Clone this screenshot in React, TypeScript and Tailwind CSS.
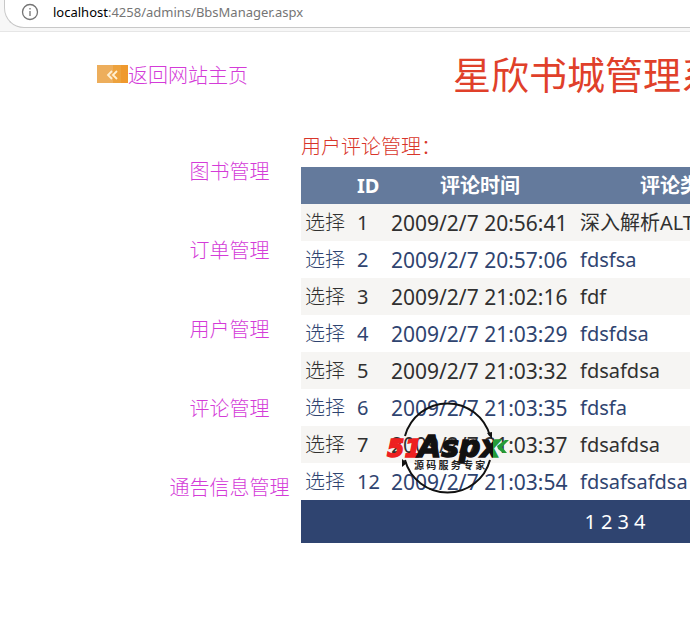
import React from 'react';

interface Comment {
  id: number;
  time: string;
  category: string;
}

const comments: Comment[] = [
  { id: 1, time: '2009/2/7 20:56:41', category: '深入解析ALTAS' },
  { id: 2, time: '2009/2/7 20:57:06', category: 'fdsfsa' },
  { id: 3, time: '2009/2/7 21:02:16', category: 'fdf' },
  { id: 4, time: '2009/2/7 21:03:29', category: 'fdsfdsa' },
  { id: 5, time: '2009/2/7 21:03:32', category: 'fdsafdsa' },
  { id: 6, time: '2009/2/7 21:03:35', category: 'fdsfa' },
  { id: 7, time: '2009/2/7 21:03:37', category: 'fdsafdsa' },
  { id: 12, time: '2009/2/7 21:03:54', category: 'fdsafsafdsa' },
];

const menu = ['图书管理', '订单管理', '用户管理', '评论管理', '通告信息管理'];

const AddressBar: React.FC = () => (
  <div className="h-8 border-b border-[#e6e6e6] bg-[#f7f7f7] pl-1">
    <div className="flex h-7 items-center gap-3 rounded-bl-[20px] border-b border-l border-[#c8c8c8] bg-white pb-1 pl-4">
      <svg className="h-5 w-5 shrink-0" viewBox="0 0 20 20" fill="none" stroke="#747474">
        <circle cx="9" cy="10" r="7.5" strokeWidth="1.3" />
        <path d="M9 9v5M9 6v1.5" strokeWidth="1.3" />
      </svg>
      <button type="button" aria-label="Address" className="text-left text-[13px] leading-5 whitespace-nowrap text-[#757575]">
        <span className="text-black">localhost</span>:4258/admins/BbsManager.aspx
      </button>
    </div>
  </div>
);

const BackIcon: React.FC = () => (
  <svg className="mb-1 h-[18px] w-[31px] shrink-0" viewBox="0 0 31 18">
    <rect width="31" height="18" fill="#eda23d" />
    <rect width="16" height="18" fill="#edae5c" />
    <rect x="24" width="7" height="18" fill="#ef992d" />
    <path d="M15 6l-4 4 4 4M20 6l-4 4 4 4" fill="none" stroke="#fff0d2" strokeWidth="1.8" />
  </svg>
);

const Watermark: React.FC = () => (
  <svg className="pointer-events-none absolute top-[267px] left-[83px] h-24 w-32" viewBox="0 0 128 96">
    <defs>
      <linearGradient id="brand">
        <stop offset="0.9" stopColor="#111" />
        <stop offset="0.9" stopColor="#249b38" />
      </linearGradient>
    </defs>
    <path d="M21 36A44 44 0 0 1 106 36" fill="none" stroke="#111" strokeWidth="2" />
    <path d="M21 60A44 44 0 0 0 106 60" fill="none" stroke="#111" strokeWidth="2" />
    <path d="M103 33l5-1 0 7zM18 67l0-8 5 4z" fill="#111" />
    <g fontFamily="'DejaVu Sans'" fontWeight="700" fontStyle="italic" strokeWidth="1.4">
      <text x="3" y="57" fontSize="25" fill="#ee2020" stroke="#ee2020">51</text>
      <text x="34" y="57" fontSize="30" fill="url(#brand)" stroke="url(#brand)">Aspx</text>
    </g>
    <path d="M113 46l8-6 4 0-7 7 5 6-4 0-5-4z" fill="#249b38" />
    <text x="30" y="69" fontSize="10" fontWeight="700" fill="#222" fontFamily="'Noto Sans CJK SC'">
      源 码 服 务 专 家
    </text>
  </svg>
);

export default function App() {
  return (
    <div className="overflow-x-clip bg-white font-['Noto_Sans','Noto_Sans_CJK_SC',sans-serif]">
      <AddressBar />

      <header className="flex items-center pt-4 pl-[97px] whitespace-nowrap">
        <a href="#home" className="flex w-[356px] shrink-0 items-center pt-[3px] text-xl leading-7 font-light text-[#d43bd8]">
          <BackIcon />
          返回网站主页
        </a>
        <h1 className="text-[38px] leading-[52px] text-[#e0402a]">星欣书城管理系统</h1>
      </header>

      <div className="flex items-start pt-[33px]">
        <nav className="flex w-[302px] shrink-0 flex-col items-center gap-[51px] pt-[25px] pl-[157px] text-xl leading-7 font-light whitespace-nowrap text-[#d43bd8]">
          {menu.map(item => (
            <a key={item} href="#manage">{item}</a>
          ))}
        </nav>

        <main className="relative -ml-px shrink-0">
          <h2 className="h-[34px] text-xl leading-7 font-light text-[#d8352a]">用户评论管理：</h2>
          <table className="w-[628px] table-fixed border-collapse text-left whitespace-nowrap">
            <colgroup>
              <col className="w-[51px]" />
              <col className="w-[34px]" />
              <col className="w-[188px]" />
              <col className="w-[212px]" />
              <col />
            </colgroup>
            <thead>
              <tr className="h-[37px] bg-[#647a9c] text-center text-xl leading-7 text-white">
                <td />
                <th className="pl-[5px] text-left">ID</th>
                <th>评论时间</th>
                <th>评论类型</th>
                <td />
              </tr>
            </thead>
            <tbody>
              {comments.map(({ id, time, category }) => (
                <tr
                  key={id}
                  className="h-[37px] text-xl leading-7 text-[#2f4470] odd:bg-[#f6f5f3] odd:text-[#303030]"
                >
                  <td className="pl-1 font-light">
                    <a href="#select">选择</a>
                  </td>
                  <td className="pl-[5px]">{id}</td>
                  <td className="pl-[5px] text-[21px]">{time}</td>
                  <td className="pl-[6px]">{category}</td>
                  <td />
                </tr>
              ))}
            </tbody>
            <tfoot>
              <tr className="h-[43px] bg-[#2f4470] text-xl text-white">
                <td colSpan={5}>
                  <div className="flex justify-center gap-[5px]">
                    <span>1</span>
                    <a href="#page2">2</a>
                    <a href="#page3">3</a>
                    <a href="#page4">4</a>
                  </div>
                </td>
              </tr>
            </tfoot>
          </table>
          <Watermark />
        </main>
      </div>
    </div>
  );
}
